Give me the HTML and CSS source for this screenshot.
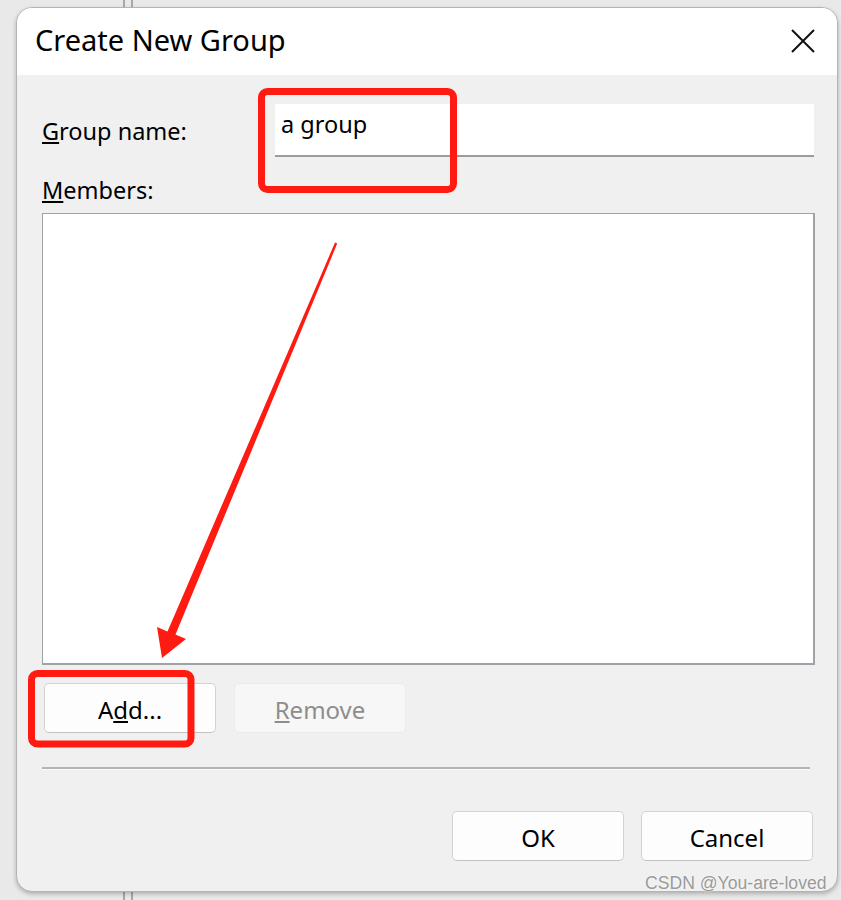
FILE: index.html
```html
<!DOCTYPE html>
<html lang="en">
<head>
    <meta charset="UTF-8">
    <meta name="viewport" content="width=device-width, initial-scale=1.0">
    <title>Create New Group</title>
    <link rel="stylesheet" href="styles.css">
</head>
<body>
    <div class="dialog">
        <header class="titlebar">
            <span class="title">Create New Group</span>
            <button class="btn-close" aria-label="Close">
                <svg width="24" height="24" viewBox="0 0 24 24">
                    <path d="M1 1 L23 23 M23 1 L1 23" stroke="#111" stroke-width="2" fill="none"/>
                </svg>
            </button>
        </header>

        <div class="content">
            <div class="field-row">
                <label for="group-name"><u>G</u>roup name:</label>
                <input type="text" id="group-name" value="a group">
            </div>

            <label class="members-label"><u>M</u>embers:</label>
            <div class="members-list"></div>

            <div class="list-actions">
                <button class="btn">A<u>d</u>d...</button>
                <button class="btn" disabled><u>R</u>emove</button>
            </div>

            <div class="separator"></div>

            <div class="dialog-actions">
                <button class="btn">OK</button>
                <button class="btn">Cancel</button>
            </div>
        </div>
    </div>

    <div class="watermark">CSDN @You-are-loved</div>

    <!-- anotaciones en rojo encima del dialogo -->
    <svg class="annotations" width="841" height="900" viewBox="0 0 841 900">
        <rect x="261.5" y="91.5" width="192" height="98" rx="6" fill="none" stroke="#ff1a12" stroke-width="7"/>
        <rect x="31.5" y="673.5" width="159.5" height="70.5" rx="6" fill="none" stroke="#ff1a12" stroke-width="7"/>
        <polygon points="335,242.6 337.2,243.6 175.5,634.5 186,639 162,658 157,627 167.5,631.5" fill="#ff1a12"/>
    </svg>
</body>
</html>
```

FILE: styles.css
```css
* {
    margin: 0;
    padding: 0;
    box-sizing: border-box;
    font-family: 'Noto Sans', 'Open Sans', sans-serif;
}

body {
    width: 841px;
    height: 900px;
    overflow: hidden;
    position: relative;
    background-color: #e9e9e9;
    background-image:
        linear-gradient(to right, transparent 123px, #a8a8a8 123px, #a8a8a8 125px, transparent 125px,
                        transparent 131px, #a8a8a8 131px, #a8a8a8 133px, transparent 133px);
    color: #000;
}

.dialog {
    margin: 7px 0 0 16px;
    width: 822px;
    height: 885px;
    border: 1px solid #b4b4b4;
    border-radius: 16px;
    overflow: hidden;
    background-color: #f0f0f0;
    box-shadow: 0 2px 4px rgba(0, 0, 0, 0.25);
    display: flex;
    flex-direction: column;
}

.titlebar {
    height: 67px;
    background-color: #fff;
    display: flex;
    justify-content: space-between;
    align-items: center;
    padding: 0 22px 4px 18px;
}

.title {
    font-size: 29px;
    letter-spacing: 0;
}

.btn-close {
    border: none;
    background: none;
    width: 24px;
    height: 24px;
    margin-top: 2px;
}

.content {
    padding: 0 22px 0 25px;
    display: flex;
    flex-direction: column;
}

.field-row {
    display: flex;
    align-items: center;
    margin-top: 29px;
}

label {
    font-size: 23.5px;
}

.btn {
    font-size: 24px;
}

.field-row label {
    width: 233px;
}

.field-row input {
    flex: 1;
    height: 53px;
    margin-right: 1px;
    border: none;
    border-bottom: 2px solid #9c9c9c;
    background-color: #fff;
    font-size: 23.5px;
    padding: 0 0 12px 6px;
    outline: none;
    color: #000;
}

.members-label {
    margin-top: 17px;
    line-height: 33px;
}

.members-list {
    margin-top: 6px;
    height: 452px;
    border: 1px solid #9fa3a8;
    border-width: 1px 2px 2px 1px;
    background-color: #fff;
}

.list-actions {
    display: flex;
    gap: 18px;
    margin-top: 18px;
    padding-left: 2px;
}

.btn {
    width: 172px;
    height: 50px;
    border: 1px solid #d3d3d3;
    border-bottom-color: #c2c2c2;
    border-radius: 5px;
    background-color: #fdfdfd;
    color: #000;
    padding-top: 2px;
}

.btn:disabled {
    background-color: #f7f7f7;
    border-color: #ebebeb;
    color: #8d8d8d;
}

.separator {
    margin-top: 34px;
    margin-right: 5px;
    border-top: 2px solid #b5b5b5;
    border-bottom: 1px solid #fafafa;
}

.dialog-actions {
    display: flex;
    justify-content: flex-end;
    gap: 17px;
    margin-top: 41px;
    padding-right: 2px;
}

.watermark {
    position: absolute;
    left: 645px;
    top: 873px;
    font-family: 'Liberation Sans', Arial, sans-serif;
    font-size: 17.6px;
    color: #9a9a9a;
    text-shadow: 0 0 2px #fff;
}

.annotations {
    position: absolute;
    top: 0;
    left: 0;
    pointer-events: none;
}
```
